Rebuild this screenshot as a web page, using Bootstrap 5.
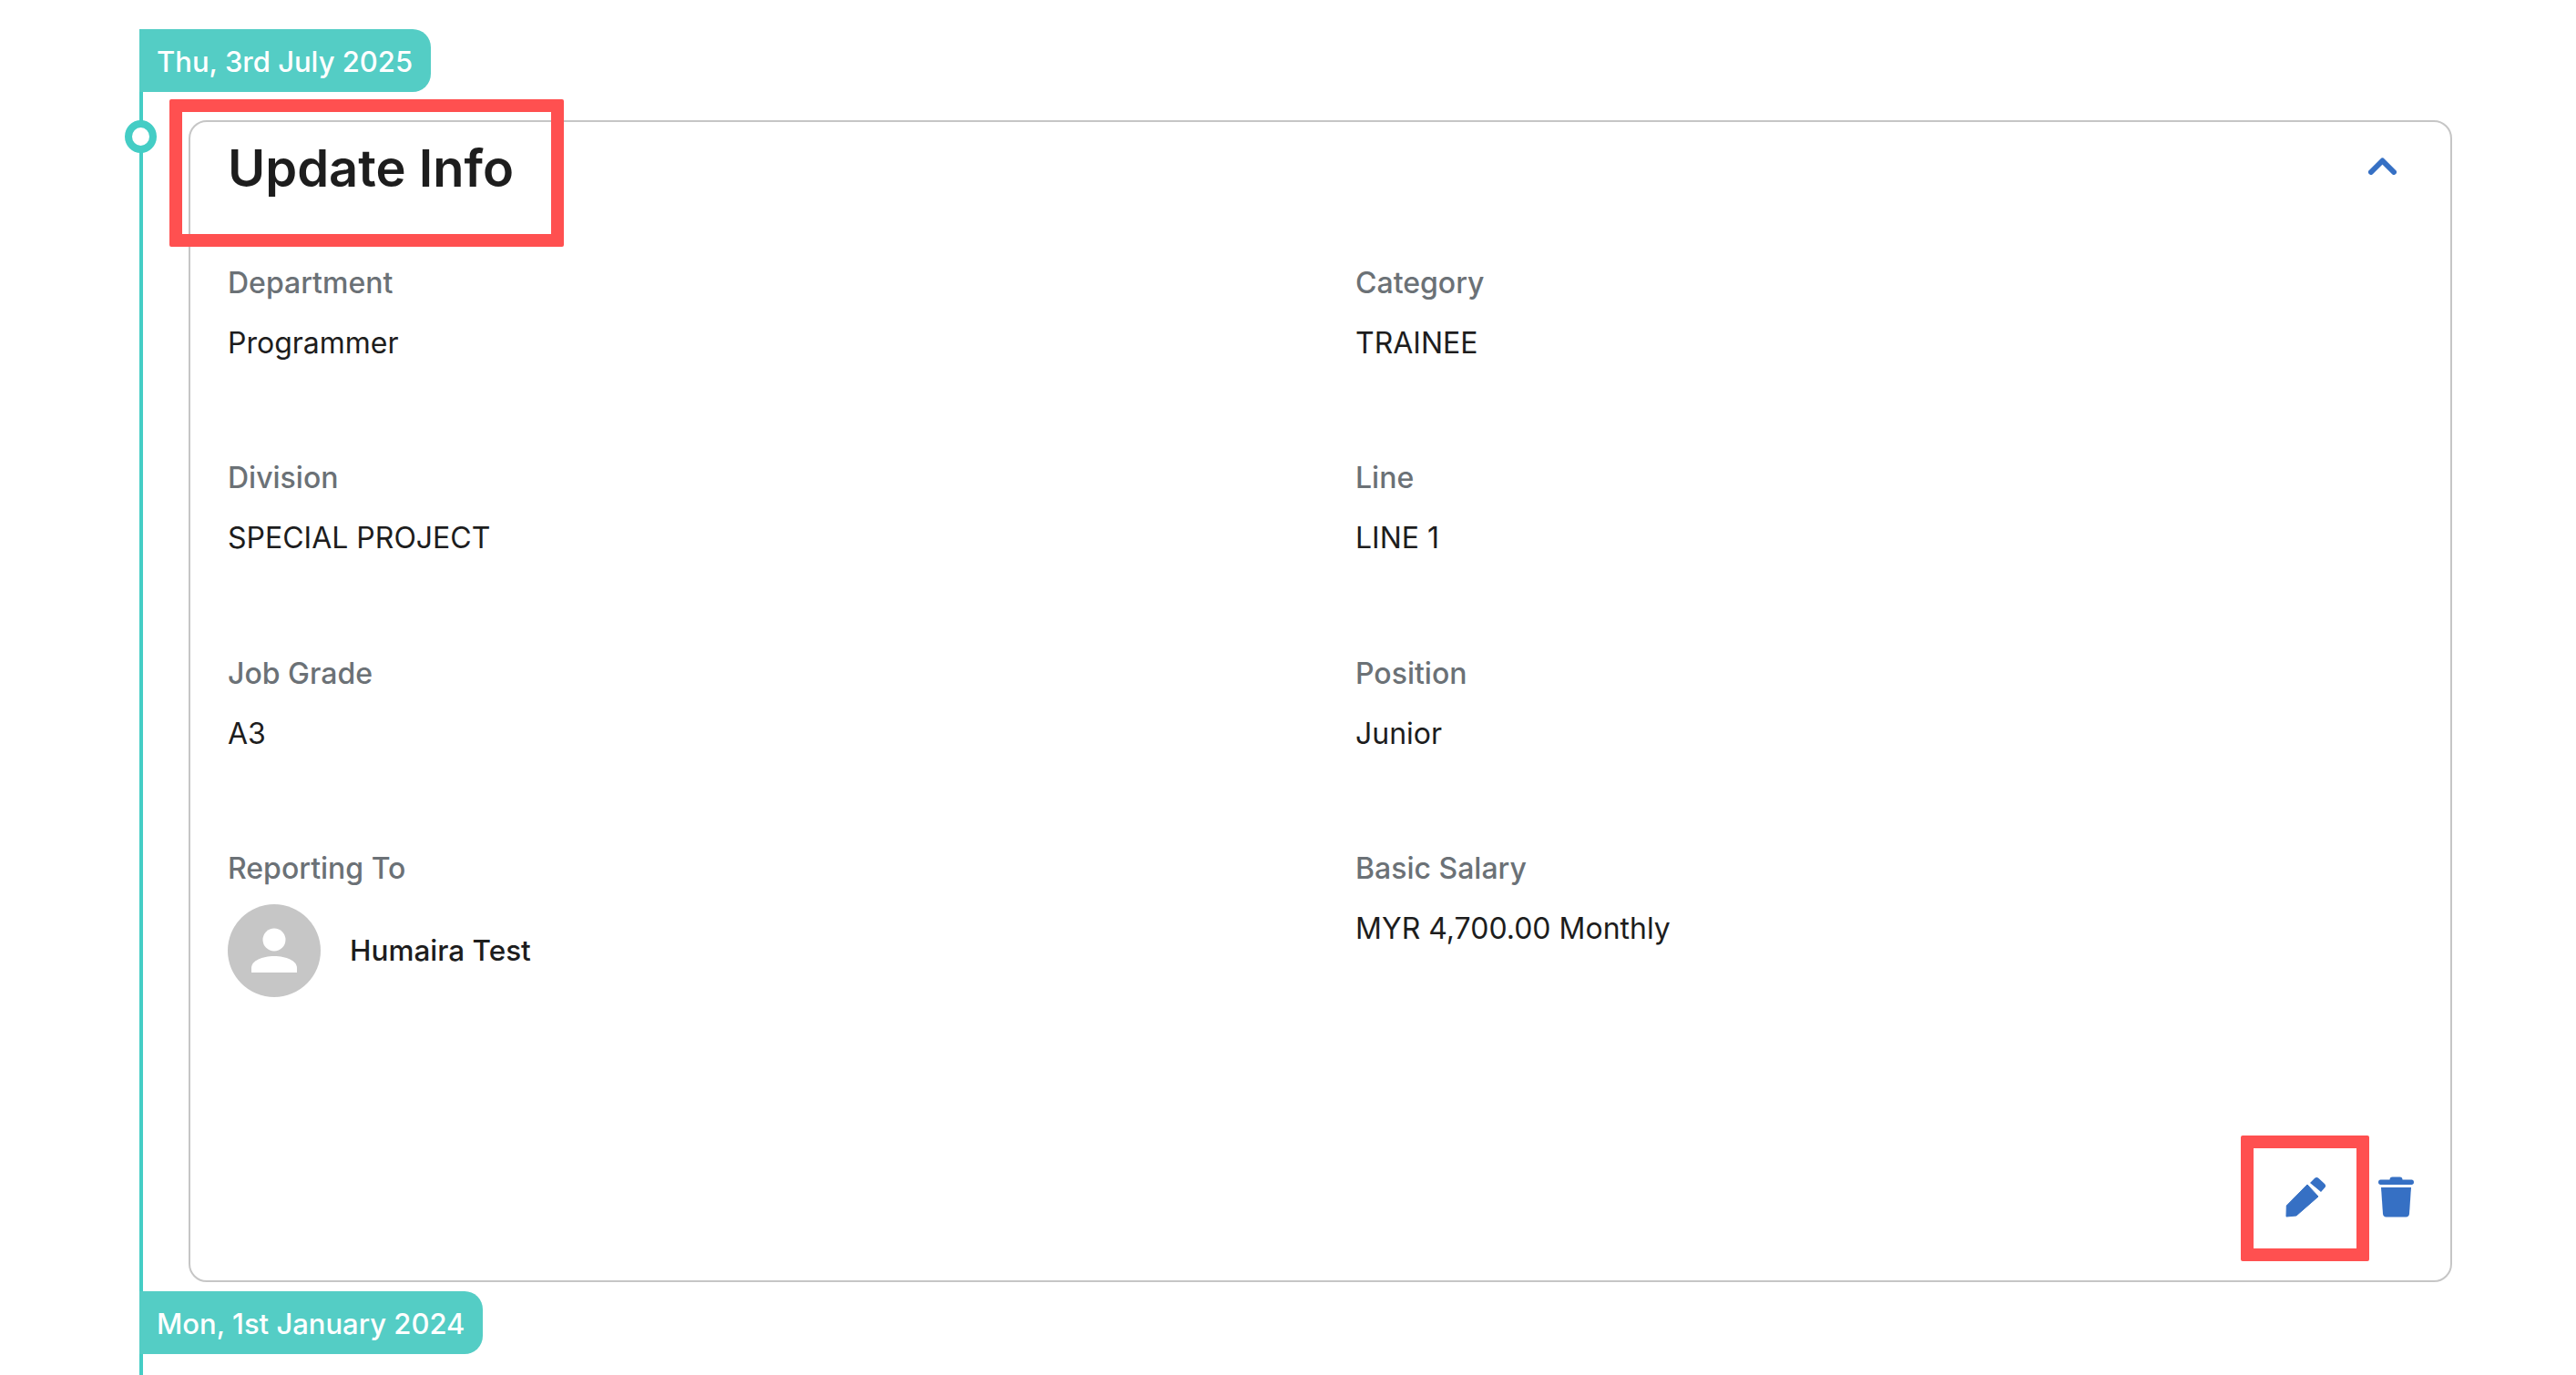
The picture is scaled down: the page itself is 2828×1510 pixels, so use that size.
<!DOCTYPE html>
<html lang="en">
<head>
    <meta charset="UTF-8">
    <title>Update Info</title>
    <link href="https://cdn.jsdelivr.net/npm/bootstrap@5.3.0/dist/css/bootstrap.min.css" rel="stylesheet">
    <style>
        html, body {
            height: 1510px;
            overflow: hidden;
            background: #fff;
        }

        body {
            font-family: "Inter", "Liberation Sans", sans-serif;
            color: #1d1d1d;
        }

        .time-line {
            margin: 32px 0 0 153px;
            height: 1478px;
            border-left: 4px solid #44cdc5;
            position: relative;
        }

        .date-tag {
            margin-left: -4px;
            height: 69px;
            width: fit-content;
            padding: 3px 20px 0 19px;
            background: #54cdc5;
            color: #fff;
            font-size: 31px;
            font-weight: 500;
            border-radius: 0 20px 20px 0;
        }

        .ring-dot {
            position: absolute;
            left: -20px;
            top: 100px;
            width: 35px;
            height: 36px;
            border: 8px solid #44cdc5;
            border-radius: 50%;
            background: #fff;
        }

        .info-box {
            margin: 31px 0 10px 50px;
            width: 2485px;
            height: 1276px;
            border: 2px solid #c6c6c6;
            border-radius: 20px;
            padding: 0 40px 0 41px;
            position: relative;
        }

        .box-head {
            height: 104px;
        }

        .box-title {
            font-size: 56px;
            font-weight: 600;
            margin: 0;
        }

        .head-chevron {
            margin: 0 19px 8px 0;
        }

        .info-grid {
            display: grid;
            grid-template-columns: 1238px 1fr;
            grid-auto-rows: 214.5px;
            padding-top: 52.5px;
        }

        .info-label {
            font-size: 32px;
            font-weight: 500;
            color: #6b7176;
            line-height: 40px;
            margin-bottom: 26px;
        }

        .info-value {
            font-size: 32px;
            line-height: 40px;
            color: #1d1d1d;
        }

        .person-row {
            margin-top: -7px;
        }

        .person-pic {
            width: 102px;
            height: 102px;
        }

        .person-name {
            font-size: 31.5px;
            font-weight: 500;
        }

        .box-actions {
            margin-top: auto;
            gap: 57px;
            padding-bottom: 69px;
        }

        .red-box {
            position: absolute;
            border: 14px solid #ff5050;
            border-radius: 2px;
            pointer-events: none;
        }

        .red-title {
            left: 186px;
            top: 109px;
            width: 433px;
            height: 162px;
        }

        .red-edit {
            left: 2460px;
            top: 1247px;
            width: 141px;
            height: 138px;
        }
    </style>
</head>
<body>

<div class="time-line">
    <div class="date-tag d-flex align-items-center">Thu, 3rd July 2025</div>
    <span class="ring-dot"></span>

    <div class="info-box d-flex flex-column">
        <div class="box-head d-flex justify-content-between align-items-center">
            <h1 class="box-title">Update Info</h1>
            <svg width="31" height="19" viewBox="0 0 31 19" class="head-chevron">
                <path d="M3 16 15.5 3.5 28 16" fill="none" stroke="#3670c4" stroke-width="6" stroke-linecap="round" stroke-linejoin="round"/>
            </svg>
        </div>

        <div class="info-grid">
            <div>
                <div class="info-label">Department</div>
                <div class="info-value">Programmer</div>
            </div>
            <div>
                <div class="info-label">Category</div>
                <div class="info-value">TRAINEE</div>
            </div>
            <div>
                <div class="info-label">Division</div>
                <div class="info-value">SPECIAL PROJECT</div>
            </div>
            <div>
                <div class="info-label">Line</div>
                <div class="info-value">LINE 1</div>
            </div>
            <div>
                <div class="info-label">Job Grade</div>
                <div class="info-value">A3</div>
            </div>
            <div>
                <div class="info-label">Position</div>
                <div class="info-value">Junior</div>
            </div>
            <div>
                <div class="info-label">Reporting To</div>
                <div class="person-row d-flex align-items-center">
                    <svg class="person-pic" viewBox="0 0 102 102">
                        <circle cx="51" cy="51" r="51" fill="#c6c6c6"/>
                        <circle cx="51" cy="39" r="12.5" fill="#fff"/>
                        <path d="M26 75v-5c0-8 12-13 25-13s25 5 25 13v5z" fill="#fff"/>
                    </svg>
                    <div class="info-value person-name ms-4 ps-2">Humaira Test</div>
                </div>
            </div>
            <div>
                <div class="info-label">Basic Salary</div>
                <div class="info-value">MYR 4,700.00 Monthly</div>
            </div>
        </div>

        <div class="box-actions d-flex justify-content-end align-items-center">
            <svg width="45" height="45" viewBox="0 0 45 45">
                <path d="M1.3 32 24 9l12 13-24 21-11 1z" fill="#3670c4" stroke="#3670c4" stroke-width="1" stroke-linejoin="round"/>
                <path d="M27 7l5-5c1.500-1.200 3-1.200 4.500 0L43 8c1.500 1.500 1.500 3 0 4.500L39 17z" fill="#3670c4"/>
            </svg>
            <svg width="39" height="45" viewBox="0 0 39 45">
                <path d="M12.500 3.500c0-2 1-3 3-3h8c2 0 3 1 3 3h10c1.500 0 2.500 1 2.500 2.800s-1 2.700-2.500 2.700h-34C1 9 0 8 0 6.300s1-2.800 2.500-2.800z" fill="#3670c4"/>
                <path d="M3 12h33l-2 29c-.2 2.300-1.500 3.500-3.500 3.500h-22C6.500 44.500 5.200 43.300 5 41z" fill="#3670c4"/>
            </svg>
        </div>
    </div>

    <div class="date-tag d-flex align-items-center">Mon, 1st January 2024</div>
</div>

<div class="red-box red-title"></div>
<div class="red-box red-edit"></div>

<script src="https://cdn.jsdelivr.net/npm/bootstrap@5.3.0/dist/js/bootstrap.bundle.min.js"></script>
</body>
</html>
